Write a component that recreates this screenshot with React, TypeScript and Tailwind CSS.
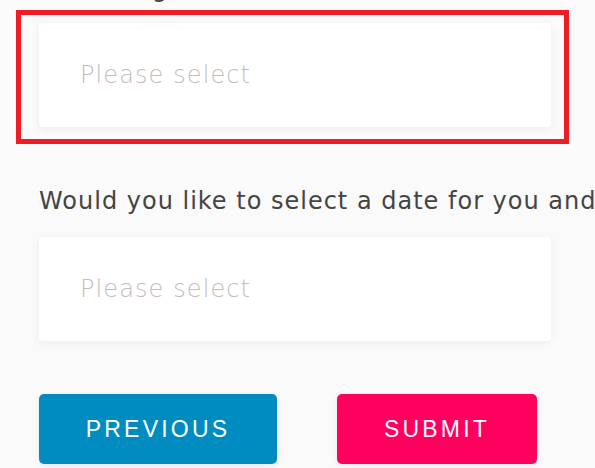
export default function App() {
  return (
    <div className="min-h-[468px] w-full overflow-hidden bg-[#fafafa] pl-[39px] font-['DejaVu_Sans',sans-serif]">
      {/* label above, mostly scrolled off */}
      <div className="-mt-[26px] h-[49px] whitespace-nowrap text-[24px] leading-[30px] tracking-[1.4px] text-[#444]">
        Attending?
      </div>

      <div className="relative w-[512px]">
        {/* red focus outline */}
        <div className="pointer-events-none absolute -left-[23px] -top-[13px] -right-[18px] -bottom-[17px] border-[5px] border-[#ee1c25]" />
        <div className="flex h-[104px] w-[512px] items-center rounded-[4px] bg-white pl-[41px] shadow-[0_2px_10px_rgba(0,0,0,0.06)]">
          <span className="text-[24px] font-extralight tracking-[1.1px] text-[#c4bcbc]">Please select</span>
        </div>
      </div>

      <div className="mt-[59px] whitespace-nowrap text-[24px] leading-[30px] tracking-[1px] text-[#444]">
        Would you like to select a date for you and your guest?
      </div>

      <div className="mt-[21px] flex h-[104px] w-[512px] items-center rounded-[4px] bg-white pl-[41px] shadow-[0_2px_10px_rgba(0,0,0,0.06)]">
        <span className="text-[24px] font-extralight tracking-[1.1px] text-[#c4bcbc]">Please select</span>
      </div>

      <div className="mt-[53px] flex gap-[60px] font-['Liberation_Sans',sans-serif]">
        <button className="flex h-[70px] w-[238px] items-center justify-center rounded-[5px] bg-[#008cc1] text-[23px] tracking-[3.2px] text-white shadow-[0_2px_6px_rgba(0,0,0,0.08)]">
          PREVIOUS
        </button>
        <button className="flex h-[70px] w-[200px] items-center justify-center rounded-[5px] bg-[#ff005f] text-[23px] tracking-[3.2px] text-white shadow-[0_2px_6px_rgba(0,0,0,0.08)]">
          SUBMIT
        </button>
      </div>
    </div>
  )
}
